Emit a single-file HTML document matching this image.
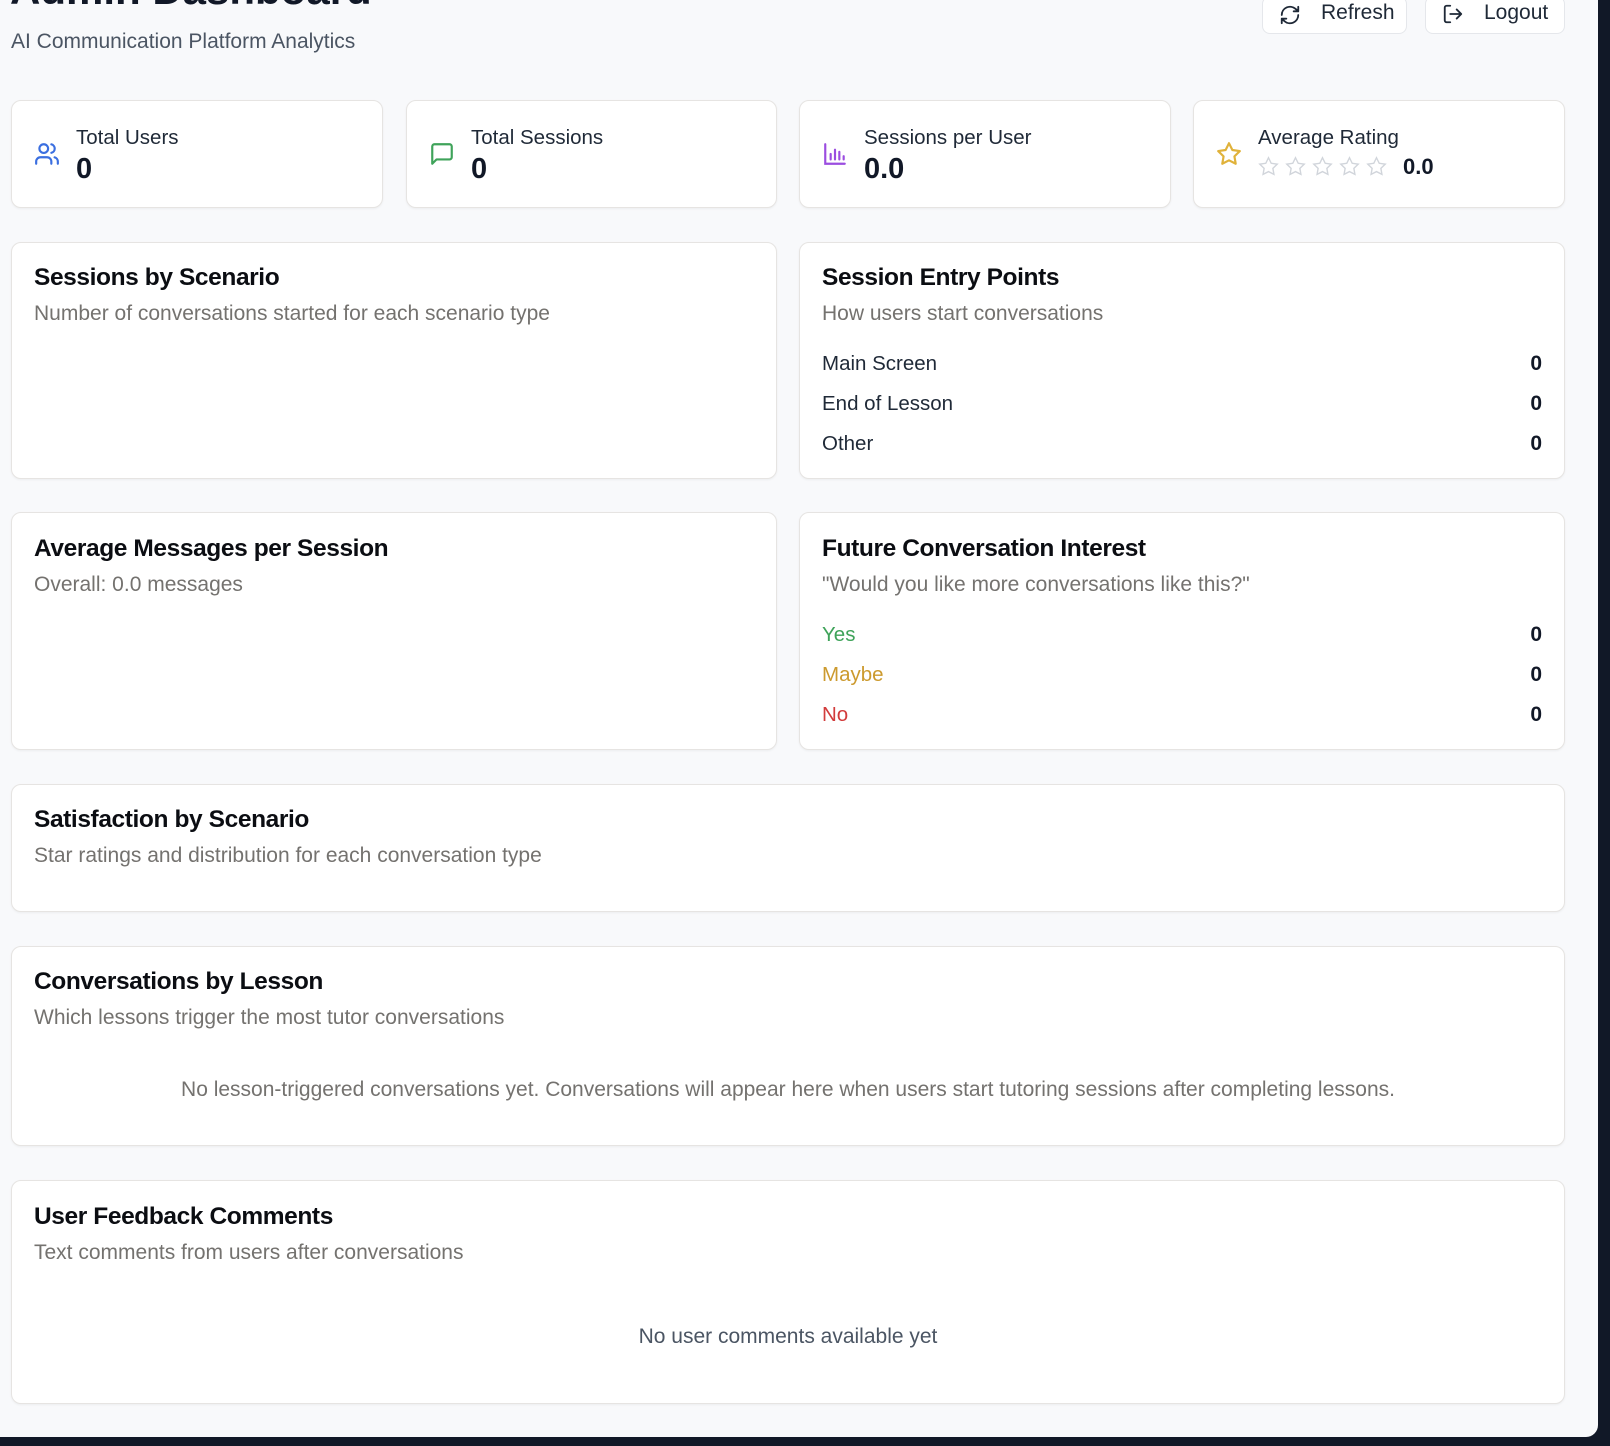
<!DOCTYPE html>
<html><head><meta charset="utf-8"><style>
*{box-sizing:border-box;margin:0;padding:0}
html,body{width:1610px;height:1446px;background:#111827;overflow:hidden;font-family:"Liberation Sans",sans-serif}
#pg{position:absolute;left:0;top:0;width:1598px;height:1437px;background:#f8f9fb;border-bottom-right-radius:12px;overflow:hidden}
.a{position:absolute}
.card{position:absolute;background:#fff;border:1px solid #e6e4e2;border-radius:10px;box-shadow:0 1px 2px rgba(0,0,0,.05)}
.h{position:absolute;left:22px;font-size:24.5px;font-weight:bold;color:#0b0d12;letter-spacing:-0.4px}
.s{position:absolute;left:22px;font-size:21px;color:#74726f}
.row{position:absolute;left:22px;right:22px;font-size:20.5px;color:#1f2937;display:flex;justify-content:space-between}
.row b{font-weight:bold;color:#111827;font-size:21px}
.lbl{position:absolute;left:64px;top:25px;font-size:20.5px;color:#1f2937}
.val{position:absolute;left:64px;top:52px;font-size:29px;font-weight:bold;color:#111827}
.ic{position:absolute;left:22px;top:40px}
.btn{position:absolute;top:-4px;height:38px;background:#fff;border:1px solid #e5e7eb;border-radius:8px;font-size:21px;color:#1f2937}
</style></head><body><div id="pg">
<div class="a" style="left:10px;top:-34px;font-size:42px;font-weight:bold;color:#111827">Admin Dashboard</div>
<div class="a" style="left:11px;top:30px;font-size:21px;color:#4b5563">AI Communication Platform Analytics</div>
<div class="btn" style="left:1262px;width:145px"><svg class="a" style="left:16px;top:7px" width="22" height="22" viewBox="0 0 24 24" fill="none" stroke="#1f2937" stroke-width="2" stroke-linecap="round" stroke-linejoin="round"><path d="M3 12a9 9 0 0 1 15-6.7L21 8M21 3v5h-5M21 12a9 9 0 0 1-15 6.7L3 16M8 16H3v5"/></svg><span class="a" style="left:58px;top:4px">Refresh</span></div>
<div class="btn" style="left:1425px;width:140px"><svg class="a" style="left:16px;top:6px" width="22" height="22" viewBox="0 0 24 24" fill="none" stroke="#1f2937" stroke-width="2" stroke-linecap="round" stroke-linejoin="round"><path d="M9 21H5a2 2 0 0 1-2-2V5a2 2 0 0 1 2-2h4M16 17l5-5-5-5M21 12H9"/></svg><span class="a" style="left:58px;top:4px">Logout</span></div>

<div class="card" style="left:11px;top:100px;width:372px;height:108px">
<svg class="ic" width="26" height="26" viewBox="0 0 24 24" fill="none" stroke="#3b6fe0" stroke-width="2" stroke-linecap="round"><path d="M16 21v-2a4 4 0 0 0-4-4H6a4 4 0 0 0-4 4v2"/><circle cx="9" cy="7" r="4"/><path d="M22 21v-2a4 4 0 0 0-3-3.9M16 3.1a4 4 0 0 1 0 7.8"/></svg>
<div class="lbl">Total Users</div><div class="val">0</div></div>
<div class="card" style="left:406px;top:100px;width:371px;height:108px">
<svg class="ic" width="26" height="26" viewBox="0 0 24 24" fill="none" stroke="#3fa35a" stroke-width="2" stroke-linejoin="round"><path d="M21 15a2 2 0 0 1-2 2H7l-4 4V5a2 2 0 0 1 2-2h14a2 2 0 0 1 2 2z"/></svg>
<div class="lbl">Total Sessions</div><div class="val">0</div></div>
<div class="card" style="left:799px;top:100px;width:372px;height:108px">
<svg class="ic" width="26" height="26" viewBox="0 0 24 24" fill="none" stroke="#9b4de0" stroke-width="2" stroke-linecap="round"><path d="M3 3v18h18M8 17v-5M12 17V8M16 17v-7M20 17v-3"/></svg>
<div class="lbl">Sessions per User</div><div class="val">0.0</div></div>
<div class="card" style="left:1193px;top:100px;width:372px;height:108px">
<svg class="ic" width="26" height="26" viewBox="0 0 24 24" fill="none" stroke="#e0b23a" stroke-width="2" stroke-linejoin="round"><path d="M12 2l3.1 6.3 6.9 1-5 4.9 1.2 6.8L12 17.8 5.8 21l1.2-6.8-5-4.9 6.9-1z"/></svg>
<div class="lbl">Average Rating</div>
<div class="a" style="left:64px;top:55px;display:flex;gap:6px"><svg width="21" height="21" viewBox="0 0 24 24" fill="none" stroke="#d1d5db" stroke-width="1.6"><path d="M12 2l3.1 6.3 6.9 1-5 4.9 1.2 6.8L12 17.8 5.8 21l1.2-6.8-5-4.9 6.9-1z"/></svg><svg width="21" height="21" viewBox="0 0 24 24" fill="none" stroke="#d1d5db" stroke-width="1.6"><path d="M12 2l3.1 6.3 6.9 1-5 4.9 1.2 6.8L12 17.8 5.8 21l1.2-6.8-5-4.9 6.9-1z"/></svg><svg width="21" height="21" viewBox="0 0 24 24" fill="none" stroke="#d1d5db" stroke-width="1.6"><path d="M12 2l3.1 6.3 6.9 1-5 4.9 1.2 6.8L12 17.8 5.8 21l1.2-6.8-5-4.9 6.9-1z"/></svg><svg width="21" height="21" viewBox="0 0 24 24" fill="none" stroke="#d1d5db" stroke-width="1.6"><path d="M12 2l3.1 6.3 6.9 1-5 4.9 1.2 6.8L12 17.8 5.8 21l1.2-6.8-5-4.9 6.9-1z"/></svg><svg width="21" height="21" viewBox="0 0 24 24" fill="none" stroke="#d1d5db" stroke-width="1.6"><path d="M12 2l3.1 6.3 6.9 1-5 4.9 1.2 6.8L12 17.8 5.8 21l1.2-6.8-5-4.9 6.9-1z"/></svg></div>
<div class="a" style="left:209px;top:53px;font-size:22px;font-weight:bold;color:#111827">0.0</div></div>

<div class="card" style="left:11px;top:242px;width:766px;height:237px">
<div class="h" style="top:21px">Sessions by Scenario</div>
<div class="s" style="top:59px">Number of conversations started for each scenario type</div></div>
<div class="card" style="left:799px;top:242px;width:766px;height:237px">
<div class="h" style="top:21px">Session Entry Points</div>
<div class="s" style="top:59px">How users start conversations</div>
<div class="row" style="top:109px"><span>Main Screen</span><b>0</b></div>
<div class="row" style="top:149px"><span>End of Lesson</span><b>0</b></div>
<div class="row" style="top:189px"><span>Other</span><b>0</b></div></div>

<div class="card" style="left:11px;top:512px;width:766px;height:238px">
<div class="h" style="top:22px">Average Messages per Session</div>
<div class="s" style="top:60px">Overall: 0.0 messages</div></div>
<div class="card" style="left:799px;top:512px;width:766px;height:238px">
<div class="h" style="top:22px">Future Conversation Interest</div>
<div class="s" style="top:60px">"Would you like more conversations like this?"</div>
<div class="row" style="top:110px"><span style="color:#3fa35a">Yes</span><b>0</b></div>
<div class="row" style="top:150px"><span style="color:#cc9a2e">Maybe</span><b>0</b></div>
<div class="row" style="top:190px"><span style="color:#d23c3c">No</span><b>0</b></div></div>

<div class="card" style="left:11px;top:784px;width:1554px;height:128px">
<div class="h" style="top:21px">Satisfaction by Scenario</div>
<div class="s" style="top:59px">Star ratings and distribution for each conversation type</div></div>

<div class="card" style="left:11px;top:946px;width:1554px;height:200px">
<div class="h" style="top:21px">Conversations by Lesson</div>
<div class="s" style="top:59px">Which lessons trigger the most tutor conversations</div>
<div class="a" style="left:0;right:0;top:131px;text-align:center;font-size:21px;color:#74726f">No lesson-triggered conversations yet. Conversations will appear here when users start tutoring sessions after completing lessons.</div></div>

<div class="card" style="left:11px;top:1180px;width:1554px;height:224px">
<div class="h" style="top:22px">User Feedback Comments</div>
<div class="s" style="top:60px">Text comments from users after conversations</div>
<div class="a" style="left:0;right:0;top:144px;text-align:center;font-size:21px;color:#4b5563">No user comments available yet</div></div>
</div></body></html>
